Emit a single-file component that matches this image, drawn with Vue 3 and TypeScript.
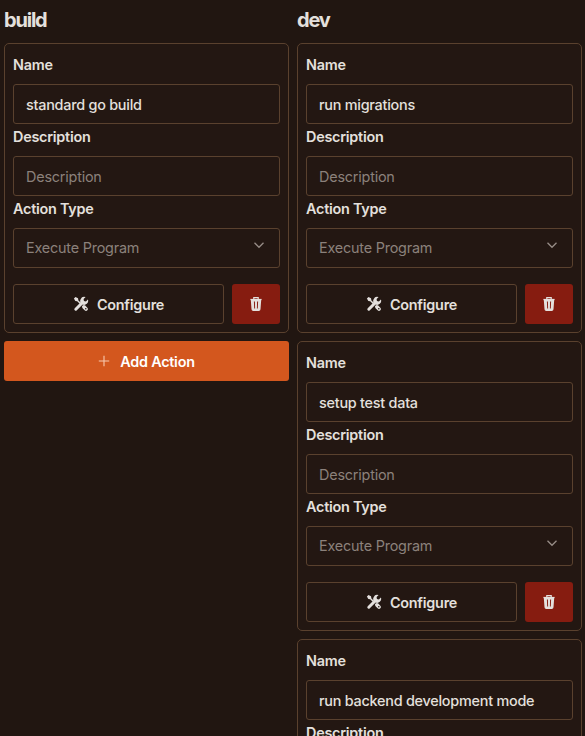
<script setup lang="ts">
interface Action {
  name: string
  description: string
}
interface Group {
  title: string
  actions: Action[]
}

const groups: Group[] = [
  { title: 'build', actions: [{ name: 'standard go build', description: '' }] },
  {
    title: 'dev',
    actions: [
      { name: 'run migrations', description: '' },
      { name: 'setup test data', description: '' },
      { name: 'run backend development mode', description: '' },
    ],
  },
]
</script>

<template>
  <main class="board">
    <section v-for="group in groups" :key="group.title" class="group">
      <h2 class="title">{{ group.title }}</h2>
      <article v-for="action in group.actions" :key="action.name" class="card">
        <label class="label">Name</label>
        <div class="field">{{ action.name }}</div>
        <label class="label">Description</label>
        <div class="field muted">{{ action.description || 'Description' }}</div>
        <label class="label">Action Type</label>
        <div class="field select muted">
          <span>Execute Program</span>
          <svg class="chevron" viewBox="0 0 12 12"><path d="M1.5 3.8 6 8.3l4.5-4.5" /></svg>
        </div>
        <div class="buttons">
          <button class="configure">
            <svg class="tools" viewBox="0 0 16 16">
              <path class="handle" d="M3 3 8.2 8.2" />
              <path class="tip" d="M.9 2.5 2.5.9 5 2.3 5.3 4.1 4.1 5.3 2.3 5Z" />
              <path class="grip" d="M10.9 10.9 13 13" />
              <path class="wrench" d="M2.8 13.2 9.8 6.2" />
              <path class="jaw" d="M14.9 3.4a4 4 0 0 1-5.7 4.9A4 4 0 0 1 12.6 1.1L10.6 3.1l.3 2 2 .3Z" />
              <circle class="hole" cx="12.8" cy="12.8" r=".8" />
            </svg>
            <span>Configure</span>
          </button>
          <button class="remove" aria-label="Delete">
            <svg class="trash" viewBox="0 0 12 14">
              <path class="lid" d="M3.8 2V.7h4.4V2" />
              <path class="bar" d="M.4 2.5h11.2" />
              <path class="can" fill-rule="evenodd" d="M.8 3h10.4l-.7 9.3A1.8 1.8 0 0 1 8.7 14H3.3a1.8 1.8 0 0 1-1.8-1.7ZM3.9 4.5l.3 7h.9l-.2-7ZM7.1 4.5l-.2 7h.9l.3-7Z" />
            </svg>
          </button>
        </div>
      </article>
      <button class="add">
        <svg class="plus" viewBox="0 0 12 12"><path d="M6 .8v10.4M.8 6h10.4" /></svg>
        <span>Add Action</span>
      </button>
    </section>
  </main>
</template>

<style>
body {
  background: #211611;
}
</style>

<style scoped>
.board {
  box-sizing: border-box;
  display: grid;
  grid-template-columns: 285px 285px;
  align-items: start;
  gap: 8px;
  height: 736px;
  padding: 0 4px;
  overflow: hidden;
  background: #211611;
  color: #e4e0dd;
  font: 600 14.4px/20px Inter, sans-serif;
  letter-spacing: -0.24px;
}
.group {
  display: flex;
  flex-direction: column;
  gap: 8px;
}
.title {
  margin: 0;
  padding-top: 6px;
  height: 29px;
  font-size: 20px;
  line-height: 28px;
  font-weight: 700;
  letter-spacing: -1.2px;
}
.card {
  display: flex;
  flex-direction: column;
  padding: 8px;
  border: 1px solid #5a412e;
  border-radius: 5px;
  background: #231712;
}
.label {
  height: 29px;
  padding-top: 3px;
  box-sizing: border-box;
  margin-bottom: 3px;
}
.field {
  box-sizing: border-box;
  display: flex;
  align-items: center;
  height: 40px;
  padding: 1px 12px 0;
  border: 1px solid #5a412e;
  border-radius: 3px;
  font-weight: 450;
}
.muted {
  color: #8b817b;
  font-weight: 400;
  letter-spacing: -0.2px;
}
.select {
  justify-content: space-between;
  padding-top: 0;
}
.chevron {
  width: 12px;
  height: 12px;
  margin: 0 2px 6px 0;
  fill: none;
  stroke: #978d87;
  stroke-width: 1.3;
}
.buttons {
  display: flex;
  gap: 8px;
  margin-top: 16px;
}
button {
  display: flex;
  align-items: center;
  justify-content: center;
  box-sizing: border-box;
  height: 40px;
  padding: 0;
  border: 0;
  border-radius: 3px;
  color: inherit;
  font: inherit;
  letter-spacing: inherit;
}
.configure {
  flex: 1;
  gap: 8px;
  border: 1px solid #5a412e;
  background: transparent;
}
.configure span,
.add span {
  padding-top: 1px;
}
.tools {
  width: 16px;
  height: 16px;
  fill: #e4e0dd;
  stroke: #e4e0dd;
}
.handle {
  stroke-width: 1.5;
}
.tip,
.jaw {
  stroke: none;
}
.grip {
  stroke-width: 3.8;
  stroke-linecap: round;
}
.wrench {
  stroke-width: 3;
  stroke-linecap: round;
}
.hole {
  fill: #231712;
  stroke: none;
}
.remove {
  width: 48px;
  background: #861c10;
}
.trash {
  width: 12px;
  height: 14px;
  fill: #e4e0dd;
}
.lid,
.bar {
  fill: none;
  stroke: #e4e0dd;
  stroke-width: 1.2;
}
.can {
  stroke: none;
}
.add {
  gap: 10px;
  background: #d3571e;
  color: #fff;
}
.plus {
  width: 12px;
  height: 12px;
  fill: none;
  stroke: #f7c9b0;
  stroke-width: 1.1;
}
</style>
